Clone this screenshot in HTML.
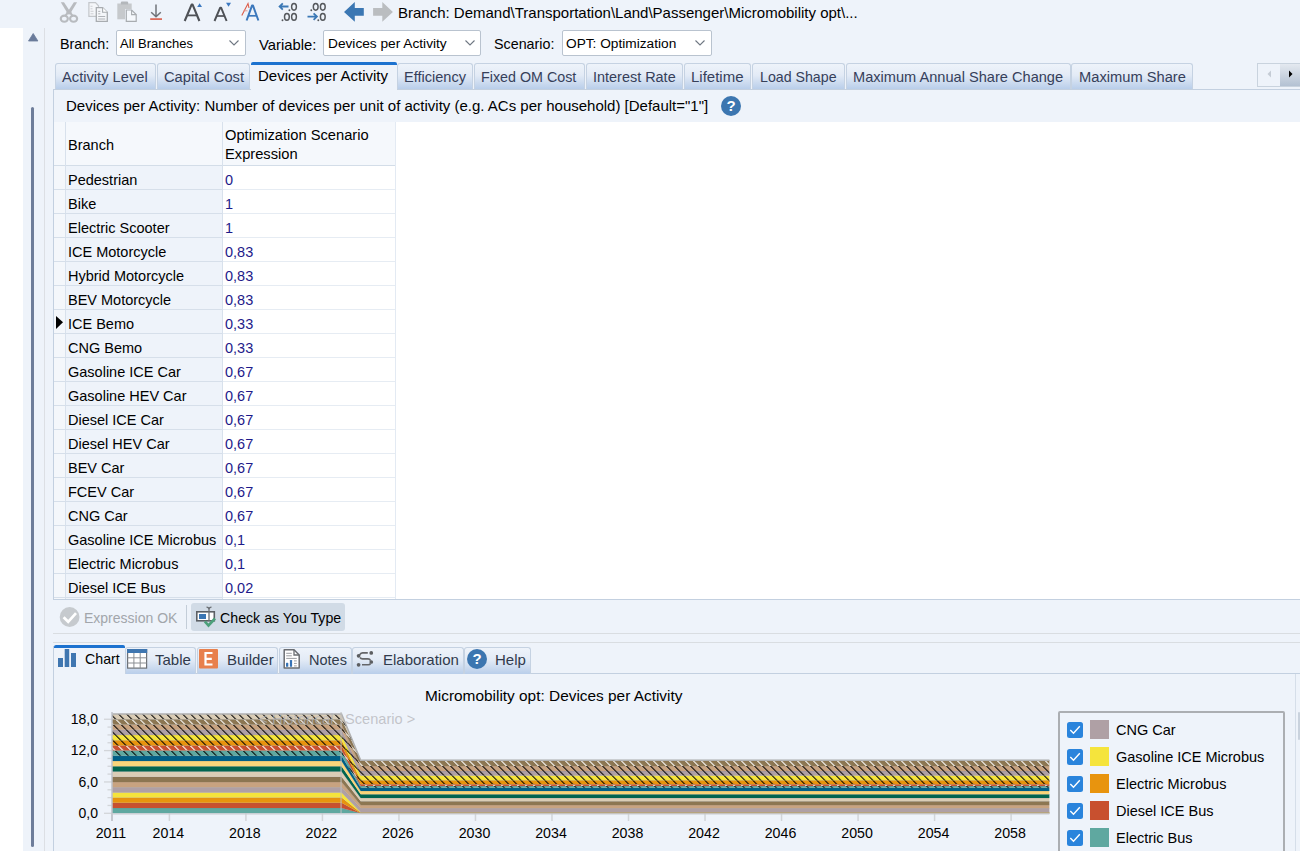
<!DOCTYPE html>
<html><head><meta charset="utf-8">
<style>
html,body{margin:0;padding:0;}
body{width:1300px;height:851px;overflow:hidden;position:relative;background:#EEF3FA;font-family:"Liberation Sans",sans-serif;color:#000;}
.a{position:absolute;}
.t{position:absolute;white-space:nowrap;font-size:15px;line-height:20px;}
.dd{position:absolute;background:#fff;border:1px solid #B9C3CF;border-radius:2px;box-sizing:border-box;height:26px;top:30px;}
.chev{position:absolute;top:9px;width:10px;height:6px;}
.tab{position:absolute;top:63px;height:26px;box-sizing:border-box;border:1px solid #C5D2E2;border-bottom:none;border-radius:3px 3px 0 0;background:linear-gradient(#EEF3FA,#E3EBF6 45%,#B9CEEA);}
.tab .t{top:3px;color:#36405A;}
.cell{position:absolute;height:24px;box-sizing:border-box;border-bottom:1px solid #D8E1EC;}
.row .t{font-size:14.5px;}
.btab{position:absolute;top:647px;height:27px;box-sizing:border-box;border:1px solid #C5D2E2;border-bottom:none;border-radius:3px 3px 0 0;background:linear-gradient(#EEF3FA,#E3EBF6 45%,#B9CEEA);}
</style></head>
<body>
<!-- left white strip -->
<div class="a" style="left:0;top:28px;width:23px;height:823px;background:#fff"></div>
<svg class="a" style="left:27px;top:32px" width="13" height="10"><path d="M1.5 9 L6.2 1.5 L10.9 9 Z" fill="#6A7B9B" stroke="#6A7B9B" stroke-width="0.8" stroke-linejoin="round"/></svg>
<div class="a" style="left:31px;top:107px;width:3px;height:740px;background:#6E7D9A;border-radius:1.5px"></div>
<div class="a" style="left:44px;top:28px;width:1px;height:823px;background:#DCDFE4"></div>

<!--TOOLBAR-->
<svg class="a" style="left:56px;top:0" width="350" height="28" viewBox="56 0 350 28">
<!-- scissors -->
<path d="M60.8 2.2 L64.0 2.2 L70.6 12.3 L67.6 13.4 Z" fill="#B8BBBF"/>
<path d="M77.1 2.2 L73.9 2.2 L67.3 12.3 L70.3 13.4 Z" fill="#B8BBBF"/>
<rect x="66.3" y="11.8" width="5.3" height="2.6" fill="#B8BBBF"/>
<path d="M67 13.5 L65.6 15.6 M70.9 13.5 L72.3 15.6" stroke="#B8BBBF" stroke-width="2"/>
<ellipse cx="64.3" cy="18.7" rx="3.55" ry="3.05" fill="none" stroke="#B8BBBF" stroke-width="2.1"/>
<ellipse cx="73.6" cy="18.7" rx="3.55" ry="3.05" fill="none" stroke="#B8BBBF" stroke-width="2.1"/>
<!-- copy -->
<path d="M88.9 2.7 H95.5 L98.5 5.8 V16.4 H88.9 Z" fill="#F4F6F9" stroke="#C3C6CA" stroke-width="1.2"/>
<path d="M90.5 6.3 H92.5 M90.5 8.8 H92.5 M90.5 11.3 H93.5 M90.5 13.8 H93.5" stroke="#C8CBCF" stroke-width="0.9"/>
<path d="M96.3 7.6 H102.6 L107.3 12.3 V21.4 H96.3 Z" fill="#F4F6F9" stroke="#A8ACB0" stroke-width="1.3"/>
<path d="M102.6 7.6 V12.3 H107.3" fill="#fff" stroke="#A8ACB0" stroke-width="1.1"/>
<path d="M98.2 11.4 H100.3 M98.2 13.8 H100.3 M98.2 16.5 H105.2 M98.2 19 H105.2" stroke="#A8ACB0" stroke-width="0.9"/>
<!-- paste -->
<path d="M117.3 3.5 H131.7 V19.3 H117.3 Z" fill="#C6C9CC"/>
<rect x="120.8" y="1.6" width="7.4" height="3" rx="1.2" fill="#B3B7BB"/>
<path d="M125 9 H131.5 L137 14 V22 H125 Z" fill="#EEF3FA"/>
<path d="M126.3 10 H131.6 L136.2 14.6 V21.3 H126.3 Z" fill="#F5F8FC" stroke="#A8ACB0" stroke-width="1.2"/>
<path d="M131.6 10 V14.6 H136.2" fill="none" stroke="#A8ACB0" stroke-width="1.1"/>
<!-- download -->
<path d="M156 4.5 V16.3 M151.2 12.3 L156 16.8 L160.8 12.3" fill="none" stroke="#70747A" stroke-width="1.5"/>
<rect x="150.2" y="18.2" width="11.8" height="1.8" fill="#DB6B5B"/>
<!-- A up -->
<path d="M184.7 21 L191.6 4.6 L192.6 4.6 L199.4 21" fill="none" stroke="#4E5156" stroke-width="2.1" stroke-linejoin="round"/>
<path d="M187 15.4 H197.2" stroke="#4E5156" stroke-width="1.8"/>
<path d="M197.2 7 L199.6 3.2 L202 7 Z" fill="#3B78C0"/>
<!-- A down -->
<path d="M214.5 21 L220.2 7.6 L221.1 7.6 L226.6 21" fill="none" stroke="#4E5156" stroke-width="1.95" stroke-linejoin="round"/>
<path d="M216.6 16 H224.6" stroke="#4E5156" stroke-width="1.7"/>
<path d="M226 2.8 L231 2.8 L228.5 6.8 Z" fill="#3B78C0"/>
<!-- font color A -->
<path d="M241.8 15.5 L248 3.5 L249 8" fill="none" stroke="#DC5B48" stroke-width="1.1"/>
<path d="M243.5 10.8 H247.5" stroke="#E49387" stroke-width="0.9"/>
<path d="M246.6 20.5 L252 5.6 L253 5.6 L258.4 20.5" fill="none" stroke="#3C78BC" stroke-width="2" stroke-linejoin="round"/>
<path d="M248.5 15.8 H256.3" stroke="#3C78BC" stroke-width="1.7"/>
<!-- decrease decimals -->
<path d="M288.5 6.5 H280 M282.8 3.4 L279.6 6.5 L282.8 9.6" fill="none" stroke="#3B78B5" stroke-width="1.8"/>
<g fill="none" stroke="#55585C" stroke-width="1.45">
<ellipse cx="294" cy="6.8" rx="2.4" ry="3.35"/>
<ellipse cx="286.9" cy="16.85" rx="2.4" ry="3.45"/>
<ellipse cx="294" cy="16.85" rx="2.4" ry="3.45"/>
<ellipse cx="315.7" cy="6.8" rx="2.4" ry="3.35"/>
<ellipse cx="322.8" cy="6.8" rx="2.4" ry="3.35"/>
<ellipse cx="322.8" cy="16.85" rx="2.4" ry="3.45"/>
</g>
<g fill="#55585C"><circle cx="289.4" cy="10.2" r="0.95"/><circle cx="282.5" cy="20.3" r="0.95"/><circle cx="311.3" cy="10.2" r="0.95"/><circle cx="318.3" cy="20.3" r="0.95"/></g>
<path d="M307.5 16.6 H316.5 M313.6 13.4 L316.9 16.6 L313.6 19.8" fill="none" stroke="#3B78B5" stroke-width="1.8"/>
<!-- back arrow -->
<path d="M344 12 L354.8 2.1 L354.8 8.1 L363.8 8.1 L363.8 15.7 L354.8 15.7 L354.8 21.7 Z" fill="#3B77B3"/>
<!-- fwd arrow -->
<path d="M392.9 12 L382.3 2.1 L382.3 8.1 L373.1 8.1 L373.1 15.7 L382.3 15.7 L382.3 21.7 Z" fill="#BABDC0"/>
</svg>

<!--/TOOLBAR-->
<!-- toolbar text -->
<div class="t" style="left:398px;top:3px;">Branch: Demand\Transportation\Land\Passenger\Micromobility opt\...</div>

<!-- row2 -->
<div class="t" style="left:60px;top:34px;font-size:14.3px">Branch:</div>
<div class="dd" style="left:116px;width:130px"><div class="t" style="left:3px;top:3px;font-size:13px">All Branches</div>
<svg class="chev" style="left:112px" viewBox="0 0 10 6"><path d="M0.5 0.5 L5 5 L9.5 0.5" fill="none" stroke="#6F7782" stroke-width="1.1"/></svg></div>
<div class="t" style="left:259px;top:34.5px;font-size:14.8px">Variable:</div>
<div class="dd" style="left:323px;width:158px"><div class="t" style="left:4px;top:3px;font-size:13.7px">Devices per Activity</div>
<svg class="chev" style="left:141px" viewBox="0 0 10 6"><path d="M0.5 0.5 L5 5 L9.5 0.5" fill="none" stroke="#6F7782" stroke-width="1.1"/></svg></div>
<div class="t" style="left:494px;top:34px;font-size:14.3px">Scenario:</div>
<div class="dd" style="left:562px;width:150px"><div class="t" style="left:3px;top:3px;font-size:13.7px">OPT: Optimization</div>
<svg class="chev" style="left:132px" viewBox="0 0 10 6"><path d="M0.5 0.5 L5 5 L9.5 0.5" fill="none" stroke="#6F7782" stroke-width="1.1"/></svg></div>

<!-- tabs -->
<div class="a" style="left:53px;top:89px;width:1247px;height:1px;background:#C3D0E0"></div>
<div class="tab" style="left:55px;width:101px"><div class="t" style="left:6px;font-size:14.7px">Activity Level</div></div>
<div class="tab" style="left:157px;width:93px"><div class="t" style="left:6px;font-size:14.7px">Capital Cost</div></div>
<div class="a" style="left:251px;top:62px;width:146px;height:28px;background:#EEF3FA;"></div>
<div class="a" style="left:251px;top:62px;width:146px;height:3px;background:#1C72CF;border-radius:2px 2px 0 0"></div>
<div class="t" style="left:258px;top:66px">Devices per Activity</div>
<div class="tab" style="left:397px;width:76px"><div class="t" style="left:6px;font-size:14.55px">Efficiency</div></div>
<div class="tab" style="left:474px;width:111px"><div class="t" style="left:6px;font-size:14.3px">Fixed OM Cost</div></div>
<div class="tab" style="left:586px;width:97px"><div class="t" style="left:6px;font-size:14.45px">Interest Rate</div></div>
<div class="tab" style="left:684px;width:67px"><div class="t" style="left:6px;font-size:15px">Lifetime</div></div>
<div class="tab" style="left:752px;width:93px"><div class="t" style="left:7px;font-size:14.2px">Load Shape</div></div>
<div class="tab" style="left:846px;width:225px"><div class="t" style="left:6px;font-size:14.6px">Maximum Annual Share Change</div></div>
<div class="tab" style="left:1071px;width:122px"><div class="t" style="left:7px;font-size:14.7px">Maximum Share</div></div>

<!-- panel left border -->
<div class="a" style="left:53px;top:89px;width:1px;height:511px;background:#C3D0E0"></div>
<div class="t" style="left:66px;top:96px">Devices per Activity: Number of devices per unit of activity (e.g. ACs per household) [Default="1"]</div>

<svg class="a" style="left:720px;top:95px" width="22" height="22" viewBox="0 0 22 22"><circle cx="11" cy="11" r="10" fill="#3C76B0"/><text x="11" y="16.3" text-anchor="middle" font-family="Liberation Sans" font-weight="bold" font-size="15" fill="#fff">?</text></svg>
<!-- tab scroll buttons -->
<div class="a" style="left:1257px;top:63px;width:43px;height:24px;box-sizing:border-box;border:1px solid #C9D3DE;background:#EEF3FA"></div>
<div class="a" style="left:1280px;top:64px;width:20px;height:22px;background:linear-gradient(#E4E9F0,#B3C1D2)"></div>
<svg class="a" style="left:1266px;top:70px" width="6" height="8"><path d="M5 0.5 L1.5 4 L5 7.5 Z" fill="#C5CCD5"/></svg>
<svg class="a" style="left:1288px;top:70px" width="6" height="8"><path d="M1 0.5 L4.5 4 L1 7.5 Z" fill="#000"/></svg>
<!--TABLE-->
<div class="a" style="left:54px;top:122px;width:1246px;height:478px;background:#fff"></div>
<div class="a" style="left:54px;top:122px;width:341px;height:44px;background:#F5F8FC"></div>
<div class="a" style="left:54px;top:165px;width:341px;height:1px;background:#D3DDE8"></div>
<div class="a" style="left:54px;top:166px;width:11px;height:433px;background:#F4F7FB"></div>
<div class="a" style="left:66px;top:166px;width:156px;height:433px;background:#EEF3FA"></div>
<div class="a" style="left:65px;top:122px;width:1px;height:477px;background:#D8E1EC"></div>
<div class="a" style="left:222px;top:122px;width:1px;height:477px;background:#D8E1EC"></div>
<div class="a" style="left:395px;top:122px;width:1px;height:477px;background:#E3EAF3"></div>
<div class="t" style="left:68px;top:135px;font-size:14.5px">Branch</div>
<div class="t" style="left:225px;top:125px;font-size:14.7px">Optimization Scenario</div>
<div class="t" style="left:225px;top:144px;font-size:14.7px">Expression</div>
<div class="a" style="left:54px;top:189px;width:168px;height:1px;background:#D6DFEA"></div>
<div class="a" style="left:223px;top:189px;width:172px;height:1px;background:#E6ECF3"></div>
<div class="t" style="left:68px;top:170px;font-size:14.5px">Pedestrian</div>
<div class="t" style="left:225px;top:170px;font-size:14.5px;color:#1E1A8A">0</div>
<div class="a" style="left:54px;top:213px;width:168px;height:1px;background:#D6DFEA"></div>
<div class="a" style="left:223px;top:213px;width:172px;height:1px;background:#E6ECF3"></div>
<div class="t" style="left:68px;top:194px;font-size:14.5px">Bike</div>
<div class="t" style="left:225px;top:194px;font-size:14.5px;color:#1E1A8A">1</div>
<div class="a" style="left:54px;top:237px;width:168px;height:1px;background:#D6DFEA"></div>
<div class="a" style="left:223px;top:237px;width:172px;height:1px;background:#E6ECF3"></div>
<div class="t" style="left:68px;top:218px;font-size:14.5px">Electric Scooter</div>
<div class="t" style="left:225px;top:218px;font-size:14.5px;color:#1E1A8A">1</div>
<div class="a" style="left:54px;top:261px;width:168px;height:1px;background:#D6DFEA"></div>
<div class="a" style="left:223px;top:261px;width:172px;height:1px;background:#E6ECF3"></div>
<div class="t" style="left:68px;top:242px;font-size:14.5px">ICE Motorcycle</div>
<div class="t" style="left:225px;top:242px;font-size:14.5px;color:#1E1A8A">0,83</div>
<div class="a" style="left:54px;top:285px;width:168px;height:1px;background:#D6DFEA"></div>
<div class="a" style="left:223px;top:285px;width:172px;height:1px;background:#E6ECF3"></div>
<div class="t" style="left:68px;top:266px;font-size:14.5px">Hybrid Motorcycle</div>
<div class="t" style="left:225px;top:266px;font-size:14.5px;color:#1E1A8A">0,83</div>
<div class="a" style="left:54px;top:309px;width:168px;height:1px;background:#D6DFEA"></div>
<div class="a" style="left:223px;top:309px;width:172px;height:1px;background:#E6ECF3"></div>
<div class="t" style="left:68px;top:290px;font-size:14.5px">BEV Motorcycle</div>
<div class="t" style="left:225px;top:290px;font-size:14.5px;color:#1E1A8A">0,83</div>
<div class="a" style="left:54px;top:333px;width:168px;height:1px;background:#D6DFEA"></div>
<div class="a" style="left:223px;top:333px;width:172px;height:1px;background:#E6ECF3"></div>
<div class="t" style="left:68px;top:314px;font-size:14.5px">ICE Bemo</div>
<div class="t" style="left:225px;top:314px;font-size:14.5px;color:#1E1A8A">0,33</div>
<div class="a" style="left:54px;top:357px;width:168px;height:1px;background:#D6DFEA"></div>
<div class="a" style="left:223px;top:357px;width:172px;height:1px;background:#E6ECF3"></div>
<div class="t" style="left:68px;top:338px;font-size:14.5px">CNG Bemo</div>
<div class="t" style="left:225px;top:338px;font-size:14.5px;color:#1E1A8A">0,33</div>
<div class="a" style="left:54px;top:381px;width:168px;height:1px;background:#D6DFEA"></div>
<div class="a" style="left:223px;top:381px;width:172px;height:1px;background:#E6ECF3"></div>
<div class="t" style="left:68px;top:362px;font-size:14.5px">Gasoline ICE Car</div>
<div class="t" style="left:225px;top:362px;font-size:14.5px;color:#1E1A8A">0,67</div>
<div class="a" style="left:54px;top:405px;width:168px;height:1px;background:#D6DFEA"></div>
<div class="a" style="left:223px;top:405px;width:172px;height:1px;background:#E6ECF3"></div>
<div class="t" style="left:68px;top:386px;font-size:14.5px">Gasoline HEV Car</div>
<div class="t" style="left:225px;top:386px;font-size:14.5px;color:#1E1A8A">0,67</div>
<div class="a" style="left:54px;top:429px;width:168px;height:1px;background:#D6DFEA"></div>
<div class="a" style="left:223px;top:429px;width:172px;height:1px;background:#E6ECF3"></div>
<div class="t" style="left:68px;top:410px;font-size:14.5px">Diesel ICE Car</div>
<div class="t" style="left:225px;top:410px;font-size:14.5px;color:#1E1A8A">0,67</div>
<div class="a" style="left:54px;top:453px;width:168px;height:1px;background:#D6DFEA"></div>
<div class="a" style="left:223px;top:453px;width:172px;height:1px;background:#E6ECF3"></div>
<div class="t" style="left:68px;top:434px;font-size:14.5px">Diesel HEV Car</div>
<div class="t" style="left:225px;top:434px;font-size:14.5px;color:#1E1A8A">0,67</div>
<div class="a" style="left:54px;top:477px;width:168px;height:1px;background:#D6DFEA"></div>
<div class="a" style="left:223px;top:477px;width:172px;height:1px;background:#E6ECF3"></div>
<div class="t" style="left:68px;top:458px;font-size:14.5px">BEV Car</div>
<div class="t" style="left:225px;top:458px;font-size:14.5px;color:#1E1A8A">0,67</div>
<div class="a" style="left:54px;top:501px;width:168px;height:1px;background:#D6DFEA"></div>
<div class="a" style="left:223px;top:501px;width:172px;height:1px;background:#E6ECF3"></div>
<div class="t" style="left:68px;top:482px;font-size:14.5px">FCEV Car</div>
<div class="t" style="left:225px;top:482px;font-size:14.5px;color:#1E1A8A">0,67</div>
<div class="a" style="left:54px;top:525px;width:168px;height:1px;background:#D6DFEA"></div>
<div class="a" style="left:223px;top:525px;width:172px;height:1px;background:#E6ECF3"></div>
<div class="t" style="left:68px;top:506px;font-size:14.5px">CNG Car</div>
<div class="t" style="left:225px;top:506px;font-size:14.5px;color:#1E1A8A">0,67</div>
<div class="a" style="left:54px;top:549px;width:168px;height:1px;background:#D6DFEA"></div>
<div class="a" style="left:223px;top:549px;width:172px;height:1px;background:#E6ECF3"></div>
<div class="t" style="left:68px;top:530px;font-size:14.5px">Gasoline ICE Microbus</div>
<div class="t" style="left:225px;top:530px;font-size:14.5px;color:#1E1A8A">0,1</div>
<div class="a" style="left:54px;top:573px;width:168px;height:1px;background:#D6DFEA"></div>
<div class="a" style="left:223px;top:573px;width:172px;height:1px;background:#E6ECF3"></div>
<div class="t" style="left:68px;top:554px;font-size:14.5px">Electric Microbus</div>
<div class="t" style="left:225px;top:554px;font-size:14.5px;color:#1E1A8A">0,1</div>
<div class="a" style="left:54px;top:597px;width:168px;height:1px;background:#D6DFEA"></div>
<div class="a" style="left:223px;top:597px;width:172px;height:1px;background:#E6ECF3"></div>
<div class="t" style="left:68px;top:578px;font-size:14.5px">Diesel ICE Bus</div>
<div class="t" style="left:225px;top:578px;font-size:14.5px;color:#1E1A8A">0,02</div>
<svg class="a" style="left:55px;top:315px" width="10" height="15"><path d="M1 1 L8 7.2 L1 14 Z" fill="#000"/></svg>
<div class="a" style="left:53px;top:599px;width:1247px;height:1px;background:#C3D0E0"></div>
<!--/TABLE-->

<!--BOTTOM-->
<!-- expression toolbar -->
<svg class="a" style="left:59px;top:606px" width="22" height="22" viewBox="59 606 22 22"><circle cx="69.6" cy="617" r="9.9" fill="#C6CACE"/><path d="M63.6 617.2 L68.2 621.8 L76 613.2" fill="none" stroke="#fff" stroke-width="2.7"/></svg>
<div class="t" style="left:84px;top:608px;font-size:14px;color:#A2A6AB">Expression OK</div>
<div class="a" style="left:186px;top:605px;width:1px;height:24px;background:#C3CDD8"></div>
<div class="a" style="left:191px;top:603px;width:154px;height:28px;background:#D1DBE6;border-radius:3px"></div>
<svg class="a" style="left:195px;top:606px" width="22" height="24" viewBox="0 0 22 24">
<rect x="1.8" y="5.8" width="17.5" height="9" fill="#fff" stroke="#5B5F64" stroke-width="1.6"/>
<rect x="4" y="8" width="7" height="5" fill="#3B76B3"/>
<path d="M11.5 1.2 Q14 1.2 14 3.5 L14 15 M16.5 1.2 Q14 1.2 14 3.5" fill="none" stroke="#6C7075" stroke-width="1.3"/>
<path d="M9.8 15.3 L13.5 19.5 L20 12.5" fill="none" stroke="#4CA07A" stroke-width="2.6"/>
</svg>
<div class="t" style="left:220px;top:608px;font-size:14.2px">Check as You Type</div>
<div class="a" style="left:53px;top:633px;width:1247px;height:1px;background:#D9DDE1"></div>
<div class="a" style="left:53px;top:642px;width:1247px;height:1px;background:#D9DDE1"></div>
<!-- bottom tabs -->
<div class="a" style="left:53px;top:673px;width:1247px;height:1px;background:#C3D0E0"></div>
<div class="a" style="left:53px;top:646px;width:1px;height:205px;background:#C3D0E0"></div>
<div class="a" style="left:54px;top:645px;width:71px;height:29px;background:#EEF3FA"></div>
<div class="a" style="left:54px;top:645px;width:71px;height:3px;background:#1C72CF;border-radius:2px 2px 0 0"></div>
<svg class="a" style="left:58px;top:649px" width="19" height="19" viewBox="0 0 19 19"><rect x="0" y="9" width="5" height="9" fill="#3F76B0"/><rect x="6.7" y="0" width="4.5" height="18" fill="#3F76B0"/><rect x="13" y="4" width="5" height="14" fill="#3F76B0"/></svg>
<div class="t" style="left:85px;top:649px;font-size:14.2px">Chart</div>
<div class="btab" style="left:125px;width:71px"></div>
<svg class="a" style="left:127px;top:649px" width="21" height="20" viewBox="0 0 21 20"><rect x="0.6" y="0.6" width="19" height="18.5" fill="#fff" stroke="#6D7176" stroke-width="1.2"/><rect x="0" y="0" width="20.2" height="4" fill="#3F76B0"/><path d="M0.6 8.8 H19.6 M0.6 14 H19.6 M6.9 4 V19 M13.2 4 V19" stroke="#8A8E93" stroke-width="1"/></svg>
<div class="t" style="left:155px;top:650px;color:#303A4C">Table</div>
<div class="btab" style="left:197px;width:81px"></div>
<svg class="a" style="left:199px;top:649px" width="20" height="20" viewBox="0 0 20 20"><rect x="0" y="0" width="19" height="19.5" rx="1" fill="#E8804D"/><path d="M6.5 4 H13.5 M6.5 9.8 H12.8 M6.5 15.5 H13.5 M6.5 3 V16.5" stroke="#fff" stroke-width="2.2" fill="none"/></svg>
<div class="t" style="left:227px;top:650px;color:#303A4C">Builder</div>
<div class="btab" style="left:279px;width:73px"></div>
<svg class="a" style="left:278px;top:645px" width="30" height="27" viewBox="278 645 30 27"><path d="M284.2 649.8 H294 L299.2 655 V667.9 H284.2 Z" fill="#fff" stroke="#6A6D72" stroke-width="1.5" stroke-linejoin="round"/><path d="M294 649.8 V655 H299.2" fill="none" stroke="#6A6D72" stroke-width="1.3"/><path d="M286.2 653.3 H291.8 M286.2 655.8 H291.8 M286.2 658.4 H296.8 M294 660.9 H296.8 M294 663.4 H296.8 M294 665.9 H296.8" stroke="#8E9196" stroke-width="0.9"/><rect x="286" y="662.8" width="2.3" height="4" rx="0.6" fill="#3572B5"/><rect x="289.9" y="660" width="2.2" height="6.8" rx="0.6" fill="#3572B5"/></svg>
<div class="t" style="left:309px;top:650px;color:#303A4C;font-size:14.5px">Notes</div>
<div class="btab" style="left:352px;width:112px"></div>
<svg class="a" style="left:350px;top:645px" width="30" height="27" viewBox="350 645 30 27"><g fill="none" stroke="#646669" stroke-width="1.6" stroke-linecap="butt"><path d="M359.5 655 Q360.5 653 362.5 652.9 H367.8"/><path d="M360 657.5 Q360.8 658.9 362.5 658.9 H368 Q369.8 658.9 370.6 660.6"/><path d="M362 664.8 H368.3 Q369.8 664.8 370.6 663.5"/></g><g fill="#5C5E61"><circle cx="371.25" cy="652.9" r="1.85"/><circle cx="358.6" cy="655.8" r="1.85"/><circle cx="371.25" cy="662" r="1.85"/><circle cx="358.6" cy="664.8" r="1.85"/></g></svg>
<div class="t" style="left:383px;top:650px;color:#303A4C">Elaboration</div>
<div class="btab" style="left:464px;width:67px"></div>
<svg class="a" style="left:466px;top:648px" width="22" height="22" viewBox="0 0 22 22"><circle cx="11" cy="11" r="10" fill="#3C76B0"/><text x="11" y="16.3" text-anchor="middle" font-family="Liberation Sans" font-weight="bold" font-size="15" fill="#fff">?</text></svg>
<div class="t" style="left:495px;top:650px;color:#303A4C">Help</div>

<!--/BOTTOM-->

<!--CHART-->
<svg class="a" style="left:0;top:674px" width="1300" height="177" viewBox="0 674 1300 177">
<defs>
<pattern id="hk" patternUnits="userSpaceOnUse" width="5.657" height="5.657" patternTransform="translate(3.8,0) rotate(-45)"><rect x="0" y="0" width="1.05" height="6" fill="#000"/></pattern>
<pattern id="hw" patternUnits="userSpaceOnUse" width="5.657" height="5.657" patternTransform="translate(3.8,0) rotate(-45)"><rect x="0" y="0" width="1.05" height="6" fill="#fff"/></pattern>
</defs>
<line x1="104" y1="813.30" x2="112" y2="813.30" stroke="#D2D5D9" stroke-width="1.3"/>
<line x1="107.5" y1="805.46" x2="112" y2="805.46" stroke="#D2D5D9" stroke-width="1.3"/>
<line x1="107.5" y1="797.62" x2="112" y2="797.62" stroke="#D2D5D9" stroke-width="1.3"/>
<line x1="107.5" y1="789.79" x2="112" y2="789.79" stroke="#D2D5D9" stroke-width="1.3"/>
<line x1="104" y1="781.95" x2="112" y2="781.95" stroke="#D2D5D9" stroke-width="1.3"/>
<line x1="107.5" y1="774.11" x2="112" y2="774.11" stroke="#D2D5D9" stroke-width="1.3"/>
<line x1="107.5" y1="766.27" x2="112" y2="766.27" stroke="#D2D5D9" stroke-width="1.3"/>
<line x1="107.5" y1="758.44" x2="112" y2="758.44" stroke="#D2D5D9" stroke-width="1.3"/>
<line x1="104" y1="750.60" x2="112" y2="750.60" stroke="#D2D5D9" stroke-width="1.3"/>
<line x1="107.5" y1="742.76" x2="112" y2="742.76" stroke="#D2D5D9" stroke-width="1.3"/>
<line x1="107.5" y1="734.92" x2="112" y2="734.92" stroke="#D2D5D9" stroke-width="1.3"/>
<line x1="107.5" y1="727.09" x2="112" y2="727.09" stroke="#D2D5D9" stroke-width="1.3"/>
<line x1="104" y1="719.25" x2="112" y2="719.25" stroke="#D2D5D9" stroke-width="1.3"/>
<line x1="112.00" y1="813" x2="112.00" y2="821" stroke="#D2D5D9" stroke-width="1.5"/>
<line x1="169.39" y1="813" x2="169.39" y2="821" stroke="#D2D5D9" stroke-width="1.5"/>
<line x1="245.91" y1="813" x2="245.91" y2="821" stroke="#D2D5D9" stroke-width="1.5"/>
<line x1="322.43" y1="813" x2="322.43" y2="821" stroke="#D2D5D9" stroke-width="1.5"/>
<line x1="398.95" y1="813" x2="398.95" y2="821" stroke="#D2D5D9" stroke-width="1.5"/>
<line x1="475.47" y1="813" x2="475.47" y2="821" stroke="#D2D5D9" stroke-width="1.5"/>
<line x1="551.99" y1="813" x2="551.99" y2="821" stroke="#D2D5D9" stroke-width="1.5"/>
<line x1="628.51" y1="813" x2="628.51" y2="821" stroke="#D2D5D9" stroke-width="1.5"/>
<line x1="705.03" y1="813" x2="705.03" y2="821" stroke="#D2D5D9" stroke-width="1.5"/>
<line x1="781.55" y1="813" x2="781.55" y2="821" stroke="#D2D5D9" stroke-width="1.5"/>
<line x1="858.07" y1="813" x2="858.07" y2="821" stroke="#D2D5D9" stroke-width="1.5"/>
<line x1="934.59" y1="813" x2="934.59" y2="821" stroke="#D2D5D9" stroke-width="1.5"/>
<line x1="1011.11" y1="813" x2="1011.11" y2="821" stroke="#D2D5D9" stroke-width="1.5"/>
<path d="M112.00,808.07 L341.56,808.07 L360.69,813.30 L1049.37,813.30 L1049.37,813.30 L360.69,813.30 L341.56,813.30 L112.00,813.30 Z" fill="#5FA8A0"/>
<path d="M112.00,808.07 L341.56,808.07 L360.69,813.30 L1049.37,813.30" fill="none" stroke="rgba(110,110,110,0.28)" stroke-width="0.9"/>
<path d="M112.00,802.85 L341.56,802.85 L360.69,813.30 L1049.37,813.30 L1049.37,813.30 L360.69,813.30 L341.56,808.07 L112.00,808.07 Z" fill="#C8502F"/>
<path d="M112.00,802.85 L341.56,802.85 L360.69,813.30 L1049.37,813.30" fill="none" stroke="rgba(110,110,110,0.28)" stroke-width="0.9"/>
<path d="M112.00,797.62 L341.56,797.62 L360.69,812.75 L1049.37,812.75 L1049.37,813.30 L360.69,813.30 L341.56,802.85 L112.00,802.85 Z" fill="#E8940E"/>
<path d="M112.00,797.62 L341.56,797.62 L360.69,812.75 L1049.37,812.75" fill="none" stroke="rgba(110,110,110,0.28)" stroke-width="0.9"/>
<path d="M112.00,792.40 L341.56,792.40 L360.69,812.20 L1049.37,812.20 L1049.37,812.75 L360.69,812.75 L341.56,797.62 L112.00,797.62 Z" fill="#F5E43C"/>
<path d="M112.00,792.40 L341.56,792.40 L360.69,812.20 L1049.37,812.20" fill="none" stroke="rgba(110,110,110,0.28)" stroke-width="0.9"/>
<path d="M112.00,787.17 L341.56,787.17 L360.69,808.30 L1049.37,808.30 L1049.37,812.20 L360.69,812.20 L341.56,792.40 L112.00,792.40 Z" fill="#AFA0A5"/>
<path d="M112.00,787.17 L341.56,787.17 L360.69,808.30 L1049.37,808.30" fill="none" stroke="rgba(110,110,110,0.28)" stroke-width="0.9"/>
<path d="M112.00,781.95 L341.56,781.95 L360.69,805.00 L1049.37,805.00 L1049.37,808.30 L360.69,808.30 L341.56,787.17 L112.00,787.17 Z" fill="#C8A380"/>
<path d="M112.00,781.95 L341.56,781.95 L360.69,805.00 L1049.37,805.00" fill="none" stroke="rgba(110,110,110,0.28)" stroke-width="0.9"/>
<path d="M112.00,776.72 L341.56,776.72 L360.69,801.30 L1049.37,801.30 L1049.37,805.00 L360.69,805.00 L341.56,781.95 L112.00,781.95 Z" fill="#8C7652"/>
<path d="M112.00,776.72 L341.56,776.72 L360.69,801.30 L1049.37,801.30" fill="none" stroke="rgba(110,110,110,0.28)" stroke-width="0.9"/>
<path d="M112.00,771.50 L341.56,771.50 L360.69,798.00 L1049.37,798.00 L1049.37,801.30 L360.69,801.30 L341.56,776.72 L112.00,776.72 Z" fill="#DACDB6"/>
<path d="M112.00,771.50 L341.56,771.50 L360.69,798.00 L1049.37,798.00" fill="none" stroke="rgba(110,110,110,0.28)" stroke-width="0.9"/>
<path d="M112.00,766.27 L341.56,766.27 L360.69,794.30 L1049.37,794.30 L1049.37,798.00 L360.69,798.00 L341.56,771.50 L112.00,771.50 Z" fill="#00654F"/>
<path d="M112.00,766.27 L341.56,766.27 L360.69,794.30 L1049.37,794.30" fill="none" stroke="rgba(110,110,110,0.28)" stroke-width="0.9"/>
<path d="M112.00,761.05 L341.56,761.05 L360.69,791.00 L1049.37,791.00 L1049.37,794.30 L360.69,794.30 L341.56,766.27 L112.00,766.27 Z" fill="#F8D57A"/>
<path d="M112.00,761.05 L341.56,761.05 L360.69,791.00 L1049.37,791.00" fill="none" stroke="rgba(110,110,110,0.28)" stroke-width="0.9"/>
<path d="M112.00,755.82 L341.56,755.82 L360.69,787.70 L1049.37,787.70 L1049.37,791.00 L360.69,791.00 L341.56,761.05 L112.00,761.05 Z" fill="#005F86"/>
<path d="M112.00,755.82 L341.56,755.82 L360.69,787.70 L1049.37,787.70" fill="none" stroke="rgba(110,110,110,0.28)" stroke-width="0.9"/>
<path d="M112.00,750.60 L341.56,750.60 L360.69,786.10 L1049.37,786.10 L1049.37,787.70 L360.69,787.70 L341.56,755.82 L112.00,755.82 Z" fill="#5FA8A0"/>
<path d="M112.00,750.60 L341.56,750.60 L360.69,786.10 L1049.37,786.10 L1049.37,787.70 L360.69,787.70 L341.56,755.82 L112.00,755.82 Z" fill="url(#hk)"/>
<path d="M112.00,750.60 L341.56,750.60 L360.69,786.10 L1049.37,786.10" fill="none" stroke="rgba(110,110,110,0.28)" stroke-width="0.9"/>
<path d="M112.00,745.38 L341.56,745.38 L360.69,784.20 L1049.37,784.20 L1049.37,786.10 L360.69,786.10 L341.56,750.60 L112.00,750.60 Z" fill="#C8502F"/>
<path d="M112.00,745.38 L341.56,745.38 L360.69,784.20 L1049.37,784.20 L1049.37,786.10 L360.69,786.10 L341.56,750.60 L112.00,750.60 Z" fill="url(#hw)"/>
<path d="M112.00,745.38 L341.56,745.38 L360.69,784.20 L1049.37,784.20" fill="none" stroke="rgba(110,110,110,0.28)" stroke-width="0.9"/>
<path d="M112.00,740.15 L341.56,740.15 L360.69,780.30 L1049.37,780.30 L1049.37,784.20 L360.69,784.20 L341.56,745.38 L112.00,745.38 Z" fill="#E8940E"/>
<path d="M112.00,740.15 L341.56,740.15 L360.69,780.30 L1049.37,780.30 L1049.37,784.20 L360.69,784.20 L341.56,745.38 L112.00,745.38 Z" fill="url(#hk)"/>
<path d="M112.00,740.15 L341.56,740.15 L360.69,780.30 L1049.37,780.30" fill="none" stroke="rgba(110,110,110,0.28)" stroke-width="0.9"/>
<path d="M112.00,734.92 L341.56,734.92 L360.69,775.50 L1049.37,775.50 L1049.37,780.30 L360.69,780.30 L341.56,740.15 L112.00,740.15 Z" fill="#F5E43C"/>
<path d="M112.00,734.92 L341.56,734.92 L360.69,775.50 L1049.37,775.50 L1049.37,780.30 L360.69,780.30 L341.56,740.15 L112.00,740.15 Z" fill="url(#hk)"/>
<path d="M112.00,734.92 L341.56,734.92 L360.69,775.50 L1049.37,775.50" fill="none" stroke="rgba(110,110,110,0.28)" stroke-width="0.9"/>
<path d="M112.00,729.70 L341.56,729.70 L360.69,771.00 L1049.37,771.00 L1049.37,775.50 L360.69,775.50 L341.56,734.92 L112.00,734.92 Z" fill="#AFA0A5"/>
<path d="M112.00,729.70 L341.56,729.70 L360.69,771.00 L1049.37,771.00 L1049.37,775.50 L360.69,775.50 L341.56,734.92 L112.00,734.92 Z" fill="url(#hk)"/>
<path d="M112.00,729.70 L341.56,729.70 L360.69,771.00 L1049.37,771.00" fill="none" stroke="rgba(110,110,110,0.28)" stroke-width="0.9"/>
<path d="M112.00,724.47 L341.56,724.47 L360.69,766.10 L1049.37,766.10 L1049.37,771.00 L360.69,771.00 L341.56,729.70 L112.00,729.70 Z" fill="#C8A380"/>
<path d="M112.00,724.47 L341.56,724.47 L360.69,766.10 L1049.37,766.10 L1049.37,771.00 L360.69,771.00 L341.56,729.70 L112.00,729.70 Z" fill="url(#hk)"/>
<path d="M112.00,724.47 L341.56,724.47 L360.69,766.10 L1049.37,766.10" fill="none" stroke="rgba(110,110,110,0.28)" stroke-width="0.9"/>
<path d="M112.00,719.25 L341.56,719.25 L360.69,760.30 L1049.37,760.30 L1049.37,766.10 L360.69,766.10 L341.56,724.47 L112.00,724.47 Z" fill="#8C7652"/>
<path d="M112.00,719.25 L341.56,719.25 L360.69,760.30 L1049.37,760.30 L1049.37,766.10 L360.69,766.10 L341.56,724.47 L112.00,724.47 Z" fill="url(#hw)"/>
<path d="M112.00,719.25 L341.56,719.25 L360.69,760.30 L1049.37,760.30" fill="none" stroke="rgba(110,110,110,0.28)" stroke-width="0.9"/>
<path d="M112.00,714.02 L341.56,714.02 L360.69,760.30 L1049.37,760.30 L1049.37,760.30 L360.69,760.30 L341.56,719.25 L112.00,719.25 Z" fill="#DACDB6"/>
<path d="M112.00,714.02 L341.56,714.02 L360.69,760.30 L1049.37,760.30 L1049.37,760.30 L360.69,760.30 L341.56,719.25 L112.00,719.25 Z" fill="url(#hk)"/>
<rect x="360.19" y="812.15" width="689.18" height="1.15" fill="#B3A17F"/>
<path d="M112.00,714.02 L341.56,714.02 L360.69,760.30 L1049.37,760.30" fill="none" stroke="#B0B0B0" stroke-width="1.5"/>
<line x1="112" y1="712" x2="112" y2="821" stroke="#BEC2C8" stroke-width="1.5"/>
<line x1="111" y1="813.8" x2="1049.37" y2="813.8" stroke="#C8CBD0" stroke-width="1.2"/>
<line x1="341.06" y1="712" x2="341.06" y2="813" stroke="rgba(190,190,190,0.7)" stroke-width="1.5"/>
</svg>
<div class="t" style="right:1202px;top:709.0px;font-size:14px">18,0</div>
<div class="t" style="right:1202px;top:740.4px;font-size:14px">12,0</div>
<div class="t" style="right:1202px;top:771.7px;font-size:14px">6,0</div>
<div class="t" style="right:1202px;top:803.1px;font-size:14px">0,0</div>
<div class="t" style="left:71.0px;width:80px;text-align:center;top:822.5px;font-size:14.2px">2011</div>
<div class="t" style="left:128.4px;width:80px;text-align:center;top:822.5px;font-size:14.2px">2014</div>
<div class="t" style="left:204.9px;width:80px;text-align:center;top:822.5px;font-size:14.2px">2018</div>
<div class="t" style="left:281.4px;width:80px;text-align:center;top:822.5px;font-size:14.2px">2022</div>
<div class="t" style="left:357.9px;width:80px;text-align:center;top:822.5px;font-size:14.2px">2026</div>
<div class="t" style="left:434.5px;width:80px;text-align:center;top:822.5px;font-size:14.2px">2030</div>
<div class="t" style="left:511.0px;width:80px;text-align:center;top:822.5px;font-size:14.2px">2034</div>
<div class="t" style="left:587.5px;width:80px;text-align:center;top:822.5px;font-size:14.2px">2038</div>
<div class="t" style="left:664.0px;width:80px;text-align:center;top:822.5px;font-size:14.2px">2042</div>
<div class="t" style="left:740.5px;width:80px;text-align:center;top:822.5px;font-size:14.2px">2046</div>
<div class="t" style="left:817.1px;width:80px;text-align:center;top:822.5px;font-size:14.2px">2050</div>
<div class="t" style="left:893.6px;width:80px;text-align:center;top:822.5px;font-size:14.2px">2054</div>
<div class="t" style="left:970.1px;width:80px;text-align:center;top:822.5px;font-size:14.2px">2058</div>
<div class="t" style="left:425px;top:686px;font-size:15.4px">Micromobility opt: Devices per Activity</div>
<div class="t" style="left:259px;top:709px;font-size:15px;color:rgba(180,180,185,0.7)">&lt; Historical</div>
<div class="t" style="left:345px;top:709px;font-size:14.6px;color:rgba(180,180,185,0.75)">Scenario &gt;</div>
<div class="a" style="left:1058px;top:711px;width:227px;height:150px;box-sizing:border-box;border:2px solid #ABAEB2;border-radius:2px"></div>
<svg class="a" style="left:1067px;top:722px" width="16" height="16" viewBox="0 0 16 16"><rect width="16" height="16" rx="2.5" fill="#2A84DC"/><path d="M3.3 8 L6.5 11.3 L12.8 4.3" fill="none" stroke="#fff" stroke-width="1.4"/></svg>
<div class="a" style="left:1090px;top:720px;width:19px;height:19px;background:#AFA0A5"></div>
<div class="t" style="left:1116px;top:720px;font-size:14.5px">CNG Car</div>
<svg class="a" style="left:1067px;top:749px" width="16" height="16" viewBox="0 0 16 16"><rect width="16" height="16" rx="2.5" fill="#2A84DC"/><path d="M3.3 8 L6.5 11.3 L12.8 4.3" fill="none" stroke="#fff" stroke-width="1.4"/></svg>
<div class="a" style="left:1090px;top:747px;width:19px;height:19px;background:#F5E43C"></div>
<div class="t" style="left:1116px;top:747px;font-size:14.5px">Gasoline ICE Microbus</div>
<svg class="a" style="left:1067px;top:776px" width="16" height="16" viewBox="0 0 16 16"><rect width="16" height="16" rx="2.5" fill="#2A84DC"/><path d="M3.3 8 L6.5 11.3 L12.8 4.3" fill="none" stroke="#fff" stroke-width="1.4"/></svg>
<div class="a" style="left:1090px;top:774px;width:19px;height:19px;background:#E8940E"></div>
<div class="t" style="left:1116px;top:774px;font-size:14.5px">Electric Microbus</div>
<svg class="a" style="left:1067px;top:803px" width="16" height="16" viewBox="0 0 16 16"><rect width="16" height="16" rx="2.5" fill="#2A84DC"/><path d="M3.3 8 L6.5 11.3 L12.8 4.3" fill="none" stroke="#fff" stroke-width="1.4"/></svg>
<div class="a" style="left:1090px;top:801px;width:19px;height:19px;background:#C8502F"></div>
<div class="t" style="left:1116px;top:801px;font-size:14.5px">Diesel ICE Bus</div>
<svg class="a" style="left:1067px;top:830px" width="16" height="16" viewBox="0 0 16 16"><rect width="16" height="16" rx="2.5" fill="#2A84DC"/><path d="M3.3 8 L6.5 11.3 L12.8 4.3" fill="none" stroke="#fff" stroke-width="1.4"/></svg>
<div class="a" style="left:1090px;top:828px;width:19px;height:19px;background:#5FA8A0"></div>
<div class="t" style="left:1116px;top:828px;font-size:14.5px">Electric Bus</div>
<div class="a" style="left:1295px;top:674px;width:1px;height:177px;background:#D5DEE9"></div>
<div class="a" style="left:1298px;top:712px;width:2px;height:28px;background:#C9D2DD;border-radius:1px"></div>
<!--/CHART-->

</body></html>
